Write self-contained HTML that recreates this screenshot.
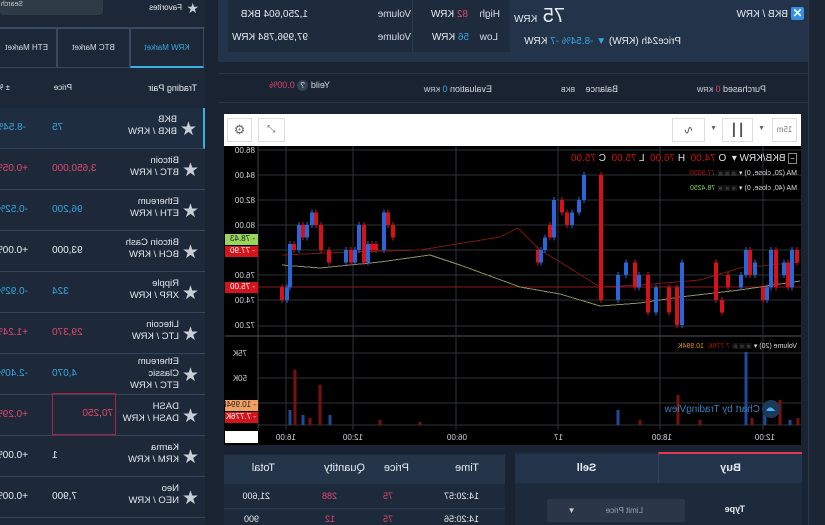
<!DOCTYPE html>
<html><head><meta charset="utf-8">
<style>
*{margin:0;padding:0;box-sizing:border-box}
html,body{width:825px;height:525px;overflow:hidden;background:#1a2332}
body{font-family:"Liberation Sans",sans-serif;color:#d8dde4;font-size:9px}
#w{position:absolute;left:0;top:0;width:825px;height:525px;transform:scaleX(-1);overflow:hidden;background:#1a2332}
.a{position:absolute;white-space:nowrap}
.blue{color:#39a6e0}.pink{color:#e2476e}.wh{color:#e8ecf0}.grey{color:#9aa4b0}
.row{position:absolute;left:620px;width:205px;height:41px;border-bottom:1px solid #34445a;background:#1d2939}
.row .st{position:absolute;left:6px;top:10px;font-size:19px;color:#c9ced6}
.row .n{position:absolute;left:26px;top:6px;font-size:9.5px;line-height:12px;color:#e4e8ee}
.row .p{position:absolute;right:52px;top:14px;font-size:10px;text-align:right}
.row .c{position:absolute;left:177px;top:14px;font-size:10px}
</style></head><body>
<div id="w">
<div class="a" style="left:0;top:0;width:17px;height:525px;background:#1c2533;border-right:1px solid #2a3648"></div>
<div class="a" style="left:17px;top:0;width:590px;height:62px;background:#22334a"></div>
<div class="a" style="left:21px;top:7px;width:13px;height:13px;background:#3a8ee0;border-radius:2px;color:#dff;font-size:12px;line-height:13px;text-align:center;font-weight:bold">✕</div>
<div class="a wh" style="left:37px;top:9px;font-size:10px">BKB / KRW</div>
<div class="a wh" style="left:260px;top:5px;font-size:20px">75 <span style="font-size:10px">KRW</span></div>
<div class="a wh" style="left:144px;top:36px;font-size:10px">Price24h (KRW) <span class="blue">▼ -8.54% -7</span> KRW</div>
<div class="a" style="left:315px;top:0;width:282px;height:52px;background:#1d2b3d"></div>
<div class="a" style="left:412px;top:0;width:1px;height:52px;background:#2a3a50"></div>
<div class="a" style="left:325px;top:9px;font-size:10px">High</div>
<div class="a wh" style="left:357px;top:9px;font-size:10px"><span class="pink">82</span> KRW</div>
<div class="a" style="left:327px;top:32px;font-size:10px">Low</div>
<div class="a wh" style="left:356px;top:32px;font-size:10px"><span class="blue">56</span> KRW</div>
<div class="a" style="left:414px;top:9px;font-size:10px">Volume</div>
<div class="a wh" style="left:517px;top:9px;font-size:10px">1,250,604 BKB</div>
<div class="a" style="left:414px;top:32px;font-size:10px">Volume</div>
<div class="a wh" style="left:517px;top:32px;font-size:10px">97,996,784 KRW</div>
<div class="a" style="left:17px;top:73px;width:590px;height:1px;background:#283548"></div>
<div class="a" style="left:17px;top:102px;width:590px;height:1px;background:#283548"></div>
<div class="a" style="left:59px;top:84px;font-size:9px">Purchased <span class="pink">0</span> <span style="font-size:7px">KRW</span></div>
<div class="a" style="left:207px;top:84px;font-size:9px">Balance <span style="font-size:7px;margin-left:8px">BKB</span></div>
<div class="a" style="left:333px;top:84px;font-size:9px">Evaluation <span class="blue">0</span> <span style="font-size:7px">KRW</span></div>
<div class="a" style="left:495px;top:80px;font-size:9px">Yeild <span style="display:inline-block;width:11px;height:11px;border-radius:6px;background:#344458;text-align:center;font-size:8px;line-height:11px">?</span> <span class="pink">0.00%</span></div>
<div class="a" style="left:24px;top:114px;width:577px;height:32px;background:#fff"></div>
<div class="a" style="left:28px;top:118px;width:25px;height:24px;border:1px solid #ddd;color:#777;font-size:8px;text-align:center;line-height:22px">15m</div>
<div class="a" style="left:60px;top:125px;color:#666;font-size:7px">▼</div>
<div class="a" style="left:72px;top:118px;width:31px;height:24px;border:1px solid #ddd;color:#555;font-size:12px;text-align:center;line-height:22px">┃┃</div>
<div class="a" style="left:108px;top:125px;color:#666;font-size:7px">▼</div>
<div class="a" style="left:120px;top:118px;width:33px;height:24px;border:1px solid #ddd;color:#555;font-size:12px;text-align:center;line-height:22px">∿</div>
<div class="a" style="left:540px;top:118px;width:27px;height:24px;border:1px solid #ddd;color:#666;font-size:10px;text-align:center;line-height:22px">⤢</div>
<div class="a" style="left:573px;top:118px;width:25px;height:24px;border:1px solid #ddd;color:#666;font-size:13px;text-align:center;line-height:22px">⚙</div>
<div class="a" style="left:24px;top:146px;width:577px;height:299px;background:#000"></div>
<svg class="a" style="left:24px;top:146px" width="577" height="299">
<g transform="translate(576,-146) scale(-1,1) translate(-225,0)" shape-rendering="crispEdges">
<g stroke="#2e3338" stroke-width="1">
<line x1="258" y1="150" x2="801" y2="150"/><line x1="258" y1="175" x2="801" y2="175"/><line x1="258" y1="200" x2="801" y2="200"/><line x1="258" y1="225" x2="801" y2="225"/><line x1="258" y1="250" x2="801" y2="250"/><line x1="258" y1="275" x2="801" y2="275"/><line x1="258" y1="300" x2="801" y2="300"/><line x1="258" y1="326" x2="801" y2="326"/>
<line x1="225" y1="336" x2="801" y2="336" stroke="#555"/>
<line x1="258" y1="353" x2="801" y2="353"/><line x1="258" y1="378" x2="801" y2="378"/><line x1="258" y1="403" x2="801" y2="403"/><line x1="258" y1="425" x2="801" y2="425"/>
<line x1="286" y1="146" x2="286" y2="430"/><line x1="353" y1="146" x2="353" y2="430"/><line x1="456" y1="146" x2="456" y2="430"/><line x1="558" y1="146" x2="558" y2="430"/><line x1="660" y1="146" x2="660" y2="430"/><line x1="763" y1="146" x2="763" y2="430"/>
<line x1="258" y1="146" x2="258" y2="430" stroke="#444"/>
</g>
<line x1="258" y1="287" x2="801" y2="287" stroke="#8a1a1a"/>
<polyline fill="none" stroke="#7a1515" stroke-width="1" points="282,255 350,252 420,250 500,237 518,228 540,250 560,262 600,287 640,285 700,280 740,268 800,262"/>
<polyline fill="none" stroke="#8d8f5a" stroke-width="1" points="282,265 320,268 380,262 430,255 460,265 520,287 560,294 600,306 640,303 680,297 740,290 800,281"/>
<g id="cd"></g>
<g id="vol"></g>
</g>
</svg>
<div class="a" style="left:570px;top:146px;font-size:8px;line-height:9px;color:#d0d4d8">86.00</div>
<div class="a" style="left:570px;top:171px;font-size:8px;color:#d0d4d8">84.00</div>
<div class="a" style="left:570px;top:196px;font-size:8px;color:#d0d4d8">82.00</div>
<div class="a" style="left:570px;top:221px;font-size:8px;color:#d0d4d8">80.00</div>
<div class="a" style="left:570px;top:271px;font-size:8px;color:#d0d4d8">76.00</div>
<div class="a" style="left:570px;top:296px;font-size:8px;color:#d0d4d8">74.00</div>
<div class="a" style="left:570px;top:321px;font-size:8px;color:#d0d4d8">72.00</div>
<div class="a" style="left:567px;top:234px;width:33px;height:11px;background:#9bd45a;color:#123;font-size:8px;padding-left:3px">- 78.43</div>
<div class="a" style="left:567px;top:246px;width:33px;height:11px;background:#d4141c;color:#fff;font-size:8px;padding-left:3px">- 77.90</div>
<div class="a" style="left:567px;top:282px;width:33px;height:11px;background:#d4141c;color:#fff;font-size:8px;padding-left:3px">- 75.00</div>
<div class="a" style="left:578px;top:349px;font-size:8px;color:#d0d4d8">75K</div>
<div class="a" style="left:578px;top:374px;font-size:8px;color:#d0d4d8">50K</div>
<div class="a" style="left:567px;top:400px;width:33px;height:11px;background:#f0a060;color:#222;font-size:8px;padding-left:2px">- 10.994K</div>
<div class="a" style="left:567px;top:412px;width:33px;height:11px;background:#d4141c;color:#fff;font-size:8px;padding-left:2px">- 7.776K</div>
<div class="a" style="left:567px;top:431px;width:33px;height:12px;background:#fff"></div>
<div class="a" style="left:50px;top:433px;font-size:8px;color:#d0d4d8">12:00</div>
<div class="a" style="left:153px;top:433px;font-size:8px;color:#d0d4d8">18:00</div>
<div class="a" style="left:262px;top:433px;font-size:8px;color:#d0d4d8">17</div>
<div class="a" style="left:358px;top:433px;font-size:8px;color:#d0d4d8">06:00</div>
<div class="a" style="left:462px;top:433px;font-size:8px;color:#d0d4d8">12:00</div>
<div class="a" style="left:529px;top:433px;font-size:8px;color:#d0d4d8">16:00</div>
<div class="a" style="left:28px;top:153px;font-size:10px;color:#e0e0e0"><span style="font-size:8px;border:1px solid #888;padding:0 1px">−</span> BKB/KRW ▾ &nbsp;O <span style="color:#c11">74.00</span> &nbsp;H <span style="color:#c11">76.00</span> &nbsp;L <span style="color:#c11">75.00</span> &nbsp;C <span style="color:#c11">75.00</span></div>
<div class="a" style="left:28px;top:169px;font-size:7px;color:#ddd">MA (20, close, 0) ▾ <span style="color:#333">▣▣▣</span> <span style="color:#a11">77.9000</span></div>
<div class="a" style="left:28px;top:184px;font-size:7px;color:#ddd">MA (40, close, 0) ▾ <span style="color:#333">▣▣▣</span> <span style="color:#8c5">78.4250</span></div>
<div class="a" style="left:28px;top:342px;font-size:7px;color:#ddd">Volume (20) ▾ <span style="color:#333">▣▣▣</span> <span style="color:#a11">7.776K</span> &nbsp;<span style="color:#e90">10.994K</span></div>
<div class="a" style="left:45px;top:400px;width:18px;height:18px;border-radius:9px;background:#1b3a5a;color:#4ab0f0;font-size:10px;text-align:center;line-height:18px">☁</div>
<div class="a" style="left:65px;top:404px;font-size:10px;color:#3a7fb8">Chart by TradingView</div>
<div class="a" style="left:23px;top:452px;width:287px;height:73px;background:#1d2a3b"></div>
<div class="a" style="left:23px;top:452px;width:144px;height:31px;background:#22334a;border-top:2px solid #e03a52;border-right:1px solid #34465c;color:#e8ecf0;font-size:11px;font-weight:bold;text-align:center;line-height:28px">Buy</div>
<div class="a" style="left:167px;top:454px;width:143px;height:29px;background:#22334a;color:#e8ecf0;font-size:11px;font-weight:bold;text-align:center;line-height:28px">Sell</div>
<div class="a wh" style="left:80px;top:504px;font-size:9px;font-weight:bold">Type</div>
<div class="a" style="left:140px;top:499px;width:138px;height:23px;background:#2a3748;border-radius:2px;color:#9aa4b0;font-size:8px;line-height:23px;padding-left:42px">Limit Price <span style="margin-left:28px;color:#ccc">▼</span></div>
<div class="a" style="left:320px;top:454px;width:281px;height:71px;background:#1d2a3b"></div>
<div class="a" style="left:320px;top:455px;width:281px;height:29px;background:#243449"></div>
<div class="a wh" style="left:346px;top:462px;font-size:11px">Time</div>
<div class="a wh" style="left:416px;top:462px;font-size:11px">Price</div>
<div class="a wh" style="left:460px;top:462px;font-size:11px">Quantity</div>
<div class="a wh" style="left:550px;top:462px;font-size:11px">Total</div>
<div class="a" style="left:320px;top:508px;width:281px;height:1px;background:#2c3a4d"></div>
<div class="a wh" style="left:346px;top:491px;font-size:9px">14:20:57</div>
<div class="a pink" style="left:432px;top:491px;font-size:9px">75</div>
<div class="a pink" style="left:488px;top:491px;font-size:9px">288</div>
<div class="a wh" style="left:555px;top:491px;font-size:9px">21,600</div>
<div class="a wh" style="left:346px;top:514px;font-size:9px">14:20:56</div>
<div class="a pink" style="left:432px;top:514px;font-size:9px">75</div>
<div class="a pink" style="left:490px;top:514px;font-size:9px">12</div>
<div class="a wh" style="left:566px;top:514px;font-size:9px">900</div>
<div class="a" style="left:620px;top:0;width:205px;height:525px;background:#1c2837"></div>
<div class="a" style="left:626px;top:0;font-size:14px;color:#c9ced6">★</div>
<div class="a wh" style="left:643px;top:3px;font-size:8px">Favorites</div>
<div class="a" style="left:722px;top:-4px;width:103px;height:19px;background:#2f3a47;border-radius:3px;color:#c8ccd2;font-size:7px;padding:5px 0 0 80px">Search</div>
<div class="a" style="left:620px;top:27px;width:205px;height:41px;border-top:1px solid #3a4a5e"></div>
<div class="a" style="left:621px;top:28px;width:74px;height:40px;border:1px solid #3a4a5e;border-bottom:2px solid #3ab0e0;color:#3aa6e0;font-size:8px;text-align:center;line-height:38px">KRW Market</div>
<div class="a" style="left:695px;top:28px;width:73px;height:40px;border:1px solid #3a4a5e;color:#d8dde4;font-size:8px;text-align:center;line-height:38px">BTC Market</div>
<div class="a" style="left:768px;top:28px;width:60px;height:40px;border:1px solid #3a4a5e;color:#d8dde4;font-size:8px;line-height:38px;padding-left:8px">ETH Market</div>
<div class="a wh" style="left:628px;top:83px;font-size:9px">Trading Pair</div>
<div class="a wh" style="left:753px;top:83px;font-size:8px">Price</div>
<div class="a wh" style="left:815px;top:83px;font-size:8px">± %</div>
<div class="row" style="top:108px;background:#1f2d40;border-left:2px solid #3ab0e0"><span class="st">★</span><span class="n">BKB<br>BKB / KRW</span><span class="p blue">75</span><span class="c blue">-8.54%</span></div>
<div class="row" style="top:149px"><span class="st">★</span><span class="n">Bitcoin<br>BTC / KRW</span><span class="p pink">3,650,000</span><span class="c pink">+0.05%</span></div>
<div class="row" style="top:190px"><span class="st">★</span><span class="n">Ethereum<br>ETH / KRW</span><span class="p blue">96,200</span><span class="c blue">-0.52%</span></div>
<div class="row" style="top:231px"><span class="st">★</span><span class="n">Bitcoin Cash<br>BCH / KRW</span><span class="p wh">93,000</span><span class="c wh">+0.00%</span></div>
<div class="row" style="top:272px"><span class="st">★</span><span class="n">Ripple<br>XRP / KRW</span><span class="p blue">324</span><span class="c blue">-0.92%</span></div>
<div class="row" style="top:313px"><span class="st">★</span><span class="n">Litecoin<br>LTC / KRW</span><span class="p pink">29,370</span><span class="c pink">+1.24%</span></div>
<div class="row" style="top:354px"><span class="st">★</span><span class="n" style="top:2px">Ethereum<br>Classic<br>ETC / KRW</span><span class="p blue">4,070</span><span class="c blue">-2.40%</span></div>
<div class="row" style="top:395px"><span class="st">★</span><span class="n">DASH<br>DASH / KRW</span><span class="p pink" style="top:-2px;right:52px;width:64px;height:42px;border:1px solid #b02040;line-height:40px;text-align:left;padding-left:2px">70,250</span><span class="c pink">+0.29%</span></div>
<div class="row" style="top:436px"><span class="st">★</span><span class="n">Karma<br>KRM / KRW</span><span class="p wh">1</span><span class="c wh">+0.00%</span></div>
<div class="row" style="top:477px"><span class="st">★</span><span class="n">Neo<br>NEO / KRW</span><span class="p wh">7,900</span><span class="c wh">+0.00%</span></div>
</div>
<script>
var C=[[282,'r',75,74],[287,'b',75,74],[290,'b',78.5,75],[294,'r',78.5,78],[299,'b',80,78],[303,'r',80,79],[307,'b',80,79],[312,'b',81,80],[316,'r',81,80],[321,'r',80,78],[329,'r',78,77],[346,'b',78,77],[351,'r',78,77],[355,'b',78,77],[359,'b',80,78],[364,'r',80,77],[368,'b',78.5,77],[372,'r',78.5,78],[376,'r',78.5,78],[384,'b',81,78],[388,'r',81,80],[393,'r',80,79],[538,'r',78,77],[541,'b',78,77],[545,'b',79,78],[550,'r',80,79],[554,'b',82,79],[562,'r',82,81],[567,'r',81,80],[572,'b',81,80],[579,'b',82,81],[584,'b',84,82],[601,'r',84,74],[618,'b',76,74],[626,'b',77,76],[635,'r',77,75],[639,'b',76,75],[648,'r',76,73],[656,'b',75,73],[669,'r',75,73],[677,'r',75,72],[682,'b',77,72],[716,'r',77,74],[722,'r',74,73],[728,'r',76,75],[741,'b',76,75],[746,'b',78,76],[750,'r',78,76],[755,'b',77,76],[763,'r',75,74],[767,'b',75,74],[771,'b',78,75],[776,'r',78,75],[784,'b',77,76],[788,'r',77,75],[792,'b',78,75],[797,'r',78,77]];
var NS='http://www.w3.org/2000/svg',g=document.getElementById('cd');
function y(p){return 150+(86-p)*12.5}
C.forEach(function(c){var r=document.createElementNS(NS,'rect');r.setAttribute('x',c[0]-2);r.setAttribute('width',4);r.setAttribute('y',y(c[2]));r.setAttribute('height',Math.max(2,y(c[3])-y(c[2])));r.setAttribute('fill',c[1]=='r'?'#d5121a':'#2a66d8');g.appendChild(r);
var l=document.createElementNS(NS,'line');l.setAttribute('x1',c[0]);l.setAttribute('x2',c[0]);l.setAttribute('y1',y(c[2])-3);l.setAttribute('y2',y(c[3])+3);l.setAttribute('stroke',c[1]=='r'?'#d5121a':'#2a66d8');g.appendChild(l);});
var V=[[290,'b',410],[295,'r',370],[303,'b',415],[310,'r',418],[320,'r',385],[330,'b',415],[380,'r',420],[420,'r',422],[618,'b',410],[640,'r',420],[678,'r',395],[700,'r',420],[746,'b',352],[752,'r',418],[765,'b',415],[780,'r',400],[790,'b',420],[798,'r',418]],vg=document.getElementById('vol');
V.forEach(function(v){var r=document.createElementNS(NS,'rect');r.setAttribute('x',v[0]-1.5);r.setAttribute('width',3);r.setAttribute('y',v[2]);r.setAttribute('height',425-v[2]);r.setAttribute('fill',v[1]=='r'?'#7a1010':'#1f4a9a');vg.appendChild(r);});
</script>
</body></html>
